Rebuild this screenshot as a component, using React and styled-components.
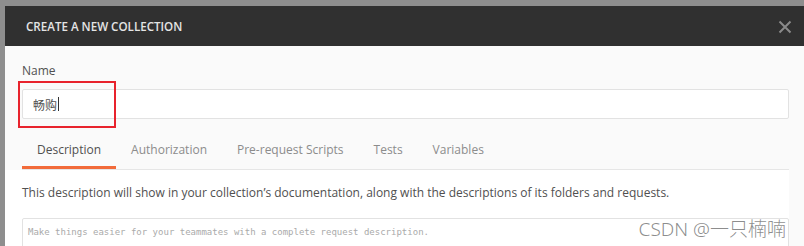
import styled, { createGlobalStyle } from "styled-components";

const GlobalStyle = createGlobalStyle`
  html, body {
    margin: 0;
    padding: 0;
    background: #8e8e8e;
    overflow: hidden;
  }
  body {
    font-family: "Open Sans", "Noto Sans CJK SC", sans-serif;
  }
`;

const Backdrop = styled.div`
  width: 804px;
  height: 246px;
  padding: 6px 0 0 5px;
  box-sizing: border-box;
  overflow: hidden;
`;

const Modal = styled.div`
  width: 820px;
  height: 300px;
  background: #fafafa;
  display: flex;
  flex-direction: column;
`;

const Header = styled.div`
  height: 40px;
  background: #303030;
  display: flex;
  align-items: center;
  justify-content: space-between;
  padding: 1px 0 0 21px;
  width: 799px;
  box-sizing: border-box;
  flex-shrink: 0;
`;

const Title = styled.div`
  color: #e4e4e4;
  font-size: 11.6px;
  font-weight: 600;
`;

const Close = styled.button`
  background: none;
  border: none;
  padding: 0;
  margin-right: 12px;
  width: 14px;
  height: 14px;
  display: flex;
  color: #8a8a8a;
`;

const Body = styled.div`
  width: 767px;
  padding: 0 0 0 17px;
`;

const Label = styled.div`
  font-size: 12px;
  color: #505050;
  margin-top: 16px;
  line-height: 17px;
`;

const Field = styled.div`
  position: relative;
  margin-top: 10px;
`;

const Input = styled.div`
  height: 28px;
  background: #fff;
  border: 1px solid #e2e2e2;
  border-radius: 2px;
  display: flex;
  align-items: center;
  padding-left: 10px;
  font-size: 12px;
  color: #505050;
  font-family: "Noto Sans CJK SC", sans-serif;
`;

const Caret = styled.span`
  display: inline-block;
  width: 1px;
  height: 14px;
  background: #333;
  margin-left: 1px;
`;

const Highlight = styled.div`
  position: absolute;
  left: -4px;
  top: -8px;
  width: 94px;
  height: 43px;
  border: 2px solid #e8232d;
  pointer-events: none;
`;

const Tabs = styled.div`
  display: flex;
  margin-top: 21px;
  border-bottom: 1px solid #e6e6e6;
`;

const Tab = styled.div`
  padding: 0 15px;
  height: 26px;
  font-size: 12px;
  line-height: 20px;
  color: ${(p) => (p.$active ? "#505050" : "#8c8c8c")};
  border-bottom: 3px solid ${(p) => (p.$active ? "#f26b3a" : "transparent")};
`;

const Panel = styled.div`
  background: #fff;
  margin-left: -17px;
  padding: 14px 0 0 17px;
  height: 200px;
`;

const Hint = styled.div`
  font-size: 12px;
  color: #505050;
  line-height: 18px;
`;

const TextArea = styled.div`
  position: relative;
  margin-top: 16px;
  height: 60px;
  border: 1px solid #e2e2e2;
  border-radius: 2px;
  padding: 8px 5px;
  font-family: "DejaVu Sans Mono", monospace;
  font-size: 9px;
  color: #aaa;
`;

const Watermark = styled.div`
  position: absolute;
  right: 2px;
  top: -5px;
  font-family: "Noto Sans", "Noto Sans CJK SC", sans-serif;
  font-size: 19px;
  font-weight: 300;
  color: rgba(120, 120, 120, 0.85);
`;

const tabs = ["Description", "Authorization", "Pre-request Scripts", "Tests", "Variables"];

export default function App() {
  return (
    <>
      <GlobalStyle />
      <Backdrop>
        <Modal>
          <Header>
            <Title>CREATE A NEW COLLECTION</Title>
            <Close>
              <svg width="14" height="14" viewBox="0 0 14 14">
                <path d="M1.5 1.5 L12.5 12.5 M12.5 1.5 L1.5 12.5" stroke="currentColor" strokeWidth="2" />
              </svg>
            </Close>
          </Header>
          <Body>
            <Label>Name</Label>
            <Field>
              <Input>
                畅购<Caret />
              </Input>
              <Highlight />
            </Field>
            <Tabs>
              {tabs.map((t, i) => (
                <Tab key={t} $active={i === 0}>
                  {t}
                </Tab>
              ))}
            </Tabs>
            <Panel>
              <Hint>
                This description will show in your collection’s documentation, along with the descriptions of its folders and requests.
              </Hint>
              <TextArea>
                Make things easier for your teammates with a complete request description.
                <Watermark>CSDN @一只楠喃</Watermark>
              </TextArea>
            </Panel>
          </Body>
        </Modal>
      </Backdrop>
    </>
  );
}
